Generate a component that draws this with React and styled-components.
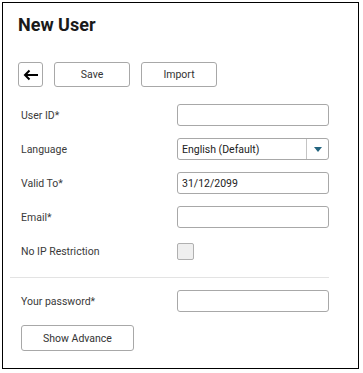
import styled, { createGlobalStyle } from "styled-components";

const GlobalStyle = createGlobalStyle`
    body {
        margin: 0;
        background: #ffffff;
        font-family: Roboto, "Liberation Sans", Arial, sans-serif;
    }
`;

export default function App() {
    return (
        <>
            <GlobalStyle />
            <Frame>
                <Title>New User</Title>
                <Toolbar>
                    <BackButton aria-label="Back">
                        <svg width="16" height="12" viewBox="0 0 16 12">
                            <path d="M15 6H2M6.5 1.5L2 6l4.5 4.5" stroke="#000" strokeWidth="2" fill="none" />
                        </svg>
                    </BackButton>
                    <Button>Save</Button>
                    <Button>Import</Button>
                </Toolbar>
                <Form>
                    <Row>
                        <Label>User ID*</Label>
                        <Input />
                    </Row>
                    <Row>
                        <Label>Language</Label>
                        <Select>
                            <span>English (Default)</span>
                            <Caret>
                                <svg width="8" height="5" viewBox="0 0 8 5">
                                    <path d="M0 0h8L4 5z" fill="#23647f" />
                                </svg>
                            </Caret>
                        </Select>
                    </Row>
                    <Row>
                        <Label>Valid To*</Label>
                        <Input defaultValue="31/12/2099" />
                    </Row>
                    <Row>
                        <Label>Email*</Label>
                        <Input />
                    </Row>
                    <Row>
                        <Label>No IP Restriction</Label>
                        <Checkbox />
                    </Row>
                    <Divider />
                    <Row>
                        <Label>Your password*</Label>
                        <Input type="password" />
                    </Row>
                </Form>
                <WideButton>Show Advance</WideButton>
            </Frame>
        </>
    );
}

const Frame = styled.div`
    box-sizing: border-box;
    margin: 2px;
    width: 357px;
    height: 367px;
    border: 1.5px solid #000;
    padding: 10px 0 0 15px;
`;

const Title = styled.h1`
    margin: 0;
    font-family: Roboto, "Liberation Sans", Arial, sans-serif;
    font-weight: 700;
    font-size: 18px;
    line-height: 24px;
    color: #1a1a1a;
`;

const Toolbar = styled.div`
    display: flex;
    gap: 11px;
    margin-top: 25px;
`;

const Button = styled.button`
    box-sizing: border-box;
    width: 76px;
    height: 25px;
    background: #ffffff;
    border: 1px solid #a8a8a8;
    border-radius: 3px;
    font-family: Roboto, "Liberation Sans", Arial, sans-serif;
    font-size: 10.5px;
    color: #333333;
    padding: 0;
`;

const BackButton = styled(Button)`
    width: 25px;
    display: flex;
    align-items: center;
    justify-content: center;
`;

const Form = styled.div`
    display: flex;
    flex-direction: column;
    margin-top: 11px;
    padding-left: 3px;
    width: 314px;
`;

const Row = styled.div`
    display: flex;
    align-items: center;
    height: 34px;
`;

const Label = styled.label`
    width: 156px;
    font-size: 10.5px;
    color: #3a3a3a;
`;

const Input = styled.input`
    box-sizing: border-box;
    width: 152px;
    height: 22px;
    border: 1px solid #a8a8a8;
    border-radius: 3px;
    padding: 0 4px;
    font-family: Roboto, "Liberation Sans", Arial, sans-serif;
    font-size: 10.5px;
    color: #222222;
    outline: none;
`;

const Select = styled.div`
    box-sizing: border-box;
    display: flex;
    align-items: center;
    width: 152px;
    height: 22px;
    border: 1px solid #a8a8a8;
    border-radius: 3px;
    padding-left: 4px;
    font-size: 10.5px;
    color: #222222;

    span {
        flex: 1;
    }
`;

const Caret = styled.div`
    display: flex;
    align-items: center;
    justify-content: center;
    width: 21px;
    height: 100%;
    border-left: 1px solid #c4c4c4;
`;

const Checkbox = styled.div`
    box-sizing: border-box;
    width: 17px;
    height: 17px;
    background: #efefef;
    border: 1px solid #b0b0b0;
    border-radius: 2px;
`;

const Divider = styled.hr`
    margin: 9px 0 6px -11px;
    border: none;
    border-top: 1px solid #e3e3e3;
    width: 319px;
`;

const WideButton = styled(Button)`
    width: 113px;
    height: 26px;
    margin: 7px 0 0 3px;
`;
